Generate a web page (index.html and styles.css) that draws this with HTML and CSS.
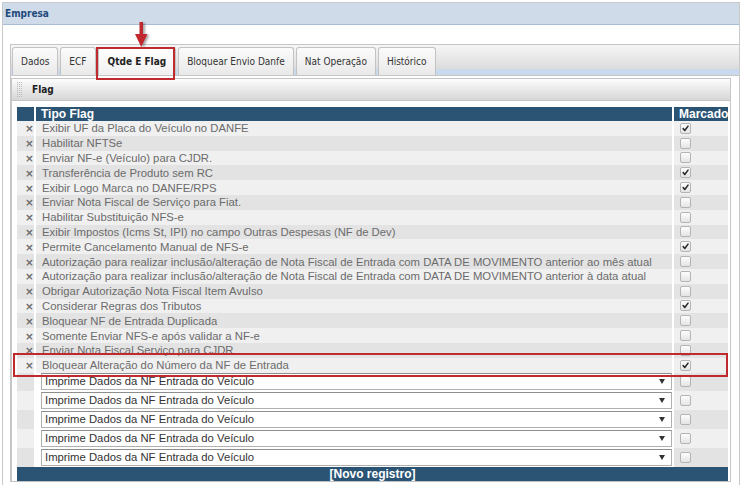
FILE: index.html
```html
<!DOCTYPE html>
<html lang="pt-BR">
<head>
<meta charset="utf-8">
<title>Empresa</title>
<link rel="stylesheet" href="styles.css">
</head>
<body>
<div class="frame">
  <div class="title">Empresa</div>
  <div class="content">
    <div class="tabs">
      <ul class="tabbar">
        <li class="tab">Dados</li>
        <li class="tab">ECF</li>
        <li class="tab active">Qtde E Flag</li>
        <li class="tab">Bloquear Envio Danfe</li>
        <li class="tab">Nat Operação</li>
        <li class="tab">Histórico</li>
      </ul>
      <div class="tabpanel">
        <div class="panel">
          <div class="panel-head">
            <svg class="grip" width="6" height="15" viewBox="0 0 6 15"><defs><pattern id="gp" width="2" height="2" patternUnits="userSpaceOnUse"><rect width="1" height="1" fill="#bcbcbc"/></pattern></defs><rect width="6" height="15" fill="url(#gp)"/></svg>
            <span>Flag</span>
          </div>
          <div class="panel-body">
            <table class="grid">
              <colgroup><col class="c1"><col class="c2"><col class="c3"></colgroup>
              <thead>
                <tr><th></th><th>Tipo Flag</th><th>Marcado</th></tr>
              </thead>
              <tbody>
                <tr class="flag"><td class="x">×</td><td>Exibir UF da Placa do Veículo no DANFE</td><td class="m"><span class="cb on"><svg viewBox="0 0 11 11"><path d="M2.6 5.6 L4.6 8 L8.6 2.6"/></svg></span></td></tr>
                <tr class="flag"><td class="x">×</td><td>Habilitar NFTSe</td><td class="m"><span class="cb"></span></td></tr>
                <tr class="flag"><td class="x">×</td><td>Enviar NF-e (Veículo) para CJDR.</td><td class="m"><span class="cb"></span></td></tr>
                <tr class="flag"><td class="x">×</td><td>Transferência de Produto sem RC</td><td class="m"><span class="cb on"><svg viewBox="0 0 11 11"><path d="M2.6 5.6 L4.6 8 L8.6 2.6"/></svg></span></td></tr>
                <tr class="flag"><td class="x">×</td><td>Exibir Logo Marca no DANFE/RPS</td><td class="m"><span class="cb on"><svg viewBox="0 0 11 11"><path d="M2.6 5.6 L4.6 8 L8.6 2.6"/></svg></span></td></tr>
                <tr class="flag"><td class="x">×</td><td>Enviar Nota Fiscal de Serviço para Fiat.</td><td class="m"><span class="cb"></span></td></tr>
                <tr class="flag"><td class="x">×</td><td>Habilitar Substituição NFS-e</td><td class="m"><span class="cb"></span></td></tr>
                <tr class="flag"><td class="x">×</td><td>Exibir Impostos (Icms St, IPI) no campo Outras Despesas (NF de Dev)</td><td class="m"><span class="cb"></span></td></tr>
                <tr class="flag"><td class="x">×</td><td>Permite Cancelamento Manual de NFS-e</td><td class="m"><span class="cb on"><svg viewBox="0 0 11 11"><path d="M2.6 5.6 L4.6 8 L8.6 2.6"/></svg></span></td></tr>
                <tr class="flag"><td class="x">×</td><td>Autorização para realizar inclusão/alteração de Nota Fiscal de Entrada com DATA DE MOVIMENTO anterior ao mês atual</td><td class="m"><span class="cb"></span></td></tr>
                <tr class="flag"><td class="x">×</td><td>Autorização para realizar inclusão/alteração de Nota Fiscal de Entrada com DATA DE MOVIMENTO anterior à data atual</td><td class="m"><span class="cb"></span></td></tr>
                <tr class="flag"><td class="x">×</td><td>Obrigar Autorização Nota Fiscal Item Avulso</td><td class="m"><span class="cb"></span></td></tr>
                <tr class="flag"><td class="x">×</td><td>Considerar Regras dos Tributos</td><td class="m"><span class="cb on"><svg viewBox="0 0 11 11"><path d="M2.6 5.6 L4.6 8 L8.6 2.6"/></svg></span></td></tr>
                <tr class="flag"><td class="x">×</td><td>Bloquear NF de Entrada Duplicada</td><td class="m"><span class="cb"></span></td></tr>
                <tr class="flag"><td class="x">×</td><td>Somente Enviar NFS-e após validar a NF-e</td><td class="m"><span class="cb"></span></td></tr>
                <tr class="flag"><td class="x">×</td><td>Enviar Nota Fiscal Serviço para CJDR</td><td class="m"><span class="cb"></span></td></tr>
                <tr class="flag"><td class="x">×</td><td>Bloquear Alteração do Número da NF de Entrada</td><td class="m"><span class="cb on"><svg viewBox="0 0 11 11"><path d="M2.6 5.6 L4.6 8 L8.6 2.6"/></svg></span></td></tr>
                <tr class="new"><td class="x"></td><td class="s"><div class="select"><span>Imprime Dados da NF Entrada do Veículo</span><i class="caret"></i></div></td><td class="m"><span class="cb"></span></td></tr>
                <tr class="new"><td class="x"></td><td class="s"><div class="select"><span>Imprime Dados da NF Entrada do Veículo</span><i class="caret"></i></div></td><td class="m"><span class="cb"></span></td></tr>
                <tr class="new"><td class="x"></td><td class="s"><div class="select"><span>Imprime Dados da NF Entrada do Veículo</span><i class="caret"></i></div></td><td class="m"><span class="cb"></span></td></tr>
                <tr class="new"><td class="x"></td><td class="s"><div class="select"><span>Imprime Dados da NF Entrada do Veículo</span><i class="caret"></i></div></td><td class="m"><span class="cb"></span></td></tr>
                <tr class="new"><td class="x"></td><td class="s"><div class="select"><span>Imprime Dados da NF Entrada do Veículo</span><i class="caret"></i></div></td><td class="m"><span class="cb"></span></td></tr>
              </tbody>
              <tfoot>
                <tr><td colspan="3">[Novo registro]</td></tr>
              </tfoot>
            </table>
          </div>
        </div>
      </div>
    </div>
  </div>
</div>
<svg class="arrow" width="24" height="32" viewBox="0 0 24 32"><path d="M9.5 2 H13 V14 H17.5 L11.25 27 L5 14 H9.5 Z"/></svg>
<div class="mark mark-tab"></div>
<div class="mark mark-row"></div>
</body>
</html>
```

FILE: styles.css
```css
* { box-sizing: border-box; }
html, body { margin: 0; padding: 0; background: #fff; }
body {
  position: relative;
  width: 742px;
  height: 485px;
  overflow: hidden;
  font-family: "DejaVu Sans Condensed", "DejaVu Sans", sans-serif;
  font-size: 10px;
  color: #333;
}
.frame {
  margin: 2px 0 0 2px;
  width: 738px;
  height: 483px;
  border: 1px solid #c9c9c9;
  border-bottom: 0;
}
.title {
  height: 22px;
  line-height: 21px;
  padding-left: 2px;
  background: #cfdbe8;
  border-bottom: 1px solid #a9bed6;
  color: #1e4a7c;
  font-weight: bold;
}
.content { padding: 19px 0 0 7px; }
.tabs {
  border: 1px solid #c6c6c6;
  border-right: 0;
  border-bottom: 0;
}
.tabbar {
  list-style: none;
  margin: 0;
  padding: 2px 0 0 1px;
  height: 31px;
  display: flex;
  align-items: flex-end;
  gap: 2px;
  border-bottom: 1px solid #c6c6c6;
  background: linear-gradient(to bottom, #f6f6f6 0, #dcdcdc 24px, #c9daef 24px, #c9daef 100%);
}
.tab {
  height: 28px;
  line-height: 27px;
  padding: 0 8px;
  border: 1px solid #c3c3c3;
  border-bottom: 0;
  border-radius: 3px 3px 0 0;
  background: linear-gradient(to bottom, #fbfbfb, #e9e9e9);
  color: #333;
  white-space: nowrap;
}
.tab.active {
  padding: 0 9px;
  font-weight: bold;
  background: linear-gradient(to bottom, #ffffff, #f0f0f0);
  color: #222;
}
.tabpanel { padding: 2px 0 0 0; }
.panel {
  width: 720px;
  border: 1px solid #c6c6c6;
  border-bottom-color: #c0c0c0;
}
.panel-head {
  height: 22px;
  display: flex;
  align-items: center;
  padding-left: 5px;
  border-bottom: 1px solid #c6c6c6;
  background: linear-gradient(to bottom, #fdfdfd, #d6d6d6);
  font-weight: bold;
  color: #222;
}
.grip { margin-right: 9px; }
.panel-body { padding: 6px 0 0 3px; }

.grid {
  width: 715px;
  table-layout: fixed;
  border-collapse: separate;
  border-spacing: 2px 0;
  font-family: "Liberation Sans", Arial, sans-serif;
  font-size: 11.3px;
}
.c1 { width: 17px; }
.c2 { width: 636px; }
.c3 { width: 54px; }
.grid th {
  height: 14px;
  padding: 0 0 0 5px;
  line-height: 13px;
  text-align: left;
  background: #2b5474;
  color: #fff;
  font-size: 12px;
  font-weight: bold;
  white-space: nowrap;
  overflow: hidden;
}
.grid td {
  padding: 0 0 0 5px;
  white-space: nowrap;
  overflow: hidden;
  vertical-align: middle;
}
.grid tr.flag td {
  height: 14.8px;
  line-height: 14px;
  color: #6b6b6b;
}
.grid tbody tr.flag td:nth-child(2) { padding-left: 6px; }
.grid tbody tr:nth-child(odd) td { background: #f0f0f0; }
.grid tbody tr:nth-child(even) td { background: #e3e3e3; }
.grid tbody tr.new td.s { background: #fff; }
.grid td.x {
  padding: 0 0 0 8px;
  color: #9eaabb;
  font-family: "DejaVu Sans", sans-serif;
  font-weight: bold;
  font-size: 10.5px;
}
.grid td.m { padding-left: 6px; }
.grid tr.new td { height: 18.8px; }
.select {
  height: 17px;
  display: flex;
  align-items: center;
  justify-content: space-between;
  padding: 0 6px 0 3px;
  border: 1px solid #b0b0b0;
  border-top-color: #8e8e8e;
  background: #fff;
  color: #333;
  line-height: 15px;
}
.caret {
  width: 0;
  height: 0;
  border-left: 3px solid transparent;
  border-right: 3px solid transparent;
  border-top: 5px solid #333;
}
.cb {
  display: block;
  width: 11px;
  height: 11px;
  border: 1px solid #b4b4b4;
  border-radius: 2px;
  background: linear-gradient(to bottom, #fdfdfd, #e4e4e4);
}
.cb svg { display: block; width: 9px; height: 9px; }
.cb svg path { fill: none; stroke: #2a2a2a; stroke-width: 1.9; stroke-linecap: round; stroke-linejoin: round; }
.grid tfoot td {
  height: 14px;
  line-height: 14px;
  padding: 0;
  text-align: center;
  background: #2b5474;
  color: #fff;
  font-size: 12px;
  font-weight: bold;
}

.arrow {
  position: absolute;
  left: 130px;
  top: 20px;
  filter: drop-shadow(2px 1px 1px rgba(0,0,0,0.35));
}
.arrow path { fill: #c0282d; }
.mark {
  position: absolute;
  border: 2px solid #bf2a2f;
}
.mark-tab { left: 96px; top: 47px; width: 79px; height: 33px; }
.mark-row { left: 13px; top: 353px; width: 715px; height: 24px; }
```
